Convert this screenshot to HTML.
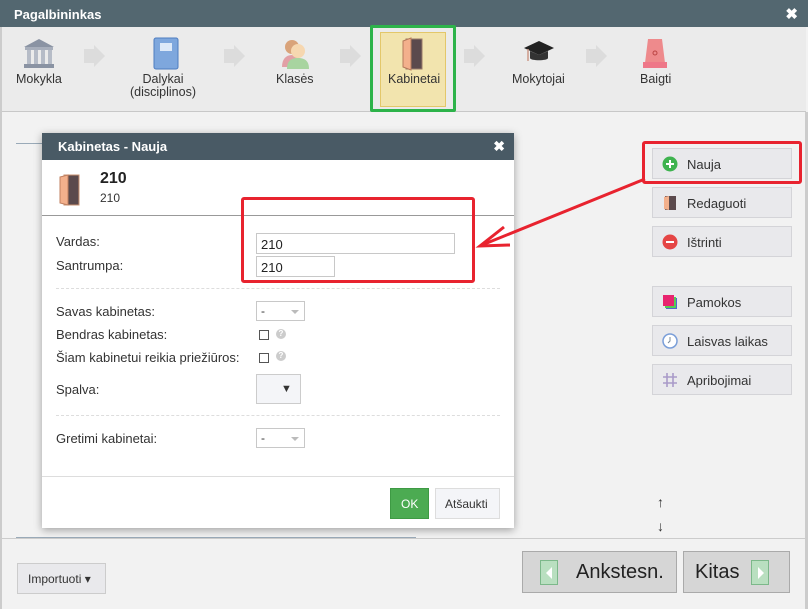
<!DOCTYPE html>
<html><head><meta charset="utf-8"><style>
*{box-sizing:border-box;margin:0;padding:0}
body{width:808px;height:609px;overflow:hidden;background:#f2f2f2;font-family:"Liberation Sans",sans-serif;font-size:13px;color:#333;position:relative}
.abs{position:absolute}
.title{left:0;top:0;width:808px;height:27px;background:#536770;color:#fff;font-weight:bold;font-size:13px;padding:7px 0 0 14px}
.wiz{left:2px;top:27px;width:804px;height:85px;background:#ebebeb;border-bottom:1px solid #c8c8c8}
.step{position:absolute;text-align:center;font-size:12.5px;color:#333;line-height:13px}
.arrow{position:absolute;width:0;height:0;border-top:11px solid transparent;border-bottom:11px solid transparent;border-left:11px solid #dcdcdc}
.arr-b{position:absolute;width:10px;height:14px;background:#dcdcdc}
.btn{position:absolute;left:652px;width:140px;height:31px;background:#e9e9ec;border:1px solid #d4d4d8;font-size:13px;padding:8px 0 0 34px;color:#333}
.btn .ic{position:absolute;left:9px;top:7px;width:16px;height:16px}
.modal{left:42px;top:133px;width:472px;height:395px;background:#fff;box-shadow:0 2px 8px rgba(0,0,0,.35)}
.mh{height:27px;background:#495a65;color:#fff;font-weight:bold;padding:6px 0 0 16px;font-size:13px}
.lbl{position:absolute;left:14px;font-size:13px;color:#333}
.inp{position:absolute;border:1px solid #c8c8c8;background:#fff;font-size:13px;padding:3px 0 0 4px;color:#222}
.sel{position:absolute;left:214px;width:49px;height:20px;border:1px solid #c8c8c8;font-size:12px;padding:2px 0 0 4px}
.sel:after{content:"";position:absolute;right:5px;top:8px;border-left:4px solid transparent;border-right:4px solid transparent;border-top:4px solid #bbb}
.cb{position:absolute;left:217px;width:10px;height:10px;border:1px solid #555}
.q{position:absolute;left:234px;width:10px;height:10px;border-radius:50%;background:#ccc;color:#fff;font-size:8px;font-weight:bold;text-align:center;line-height:10px}
.dash{position:absolute;left:14px;width:444px;border-top:1px dashed #ddd}
.gb{position:absolute;top:8px;width:18px;height:25px;background:#b9dfc0;border:1px solid #7cb88a}
</style></head><body>
<div class="abs title">Pagalbininkas<span style="position:absolute;right:10px;top:5px;font-size:15px">✖</span></div>
<div class="abs" style="left:0;top:27px;width:2px;height:582px;background:#ccc"></div>
<div class="abs wiz">
 <svg class="abs" style="left:20px;top:10px" width="34" height="32" viewBox="0 0 34 32"><polygon points="17,2 2,10 32,10" fill="#8a93a3"/><rect x="3" y="10" width="28" height="3" fill="#a7aebb"/><g fill="#b6bcc7"><rect x="5" y="13" width="4" height="14"/><rect x="12" y="13" width="4" height="14"/><rect x="19" y="13" width="4" height="14"/><rect x="26" y="13" width="4" height="14"/></g><rect x="2" y="27" width="30" height="4" fill="#8a93a3"/></svg>
 <div class="step" style="left:14px;top:46px">Mokykla</div>
 <div class="arr-b" style="left:82px;top:22px"></div><div class="arrow" style="left:92px;top:18px"></div>
 <svg class="abs" style="left:150px;top:10px" width="28" height="34"><rect x="2" y="1" width="24" height="31" rx="2" fill="#7ea7dd" stroke="#4d7cc0"/><rect x="8" y="6" width="12" height="8" fill="#dde9f8"/></svg>
 <div class="step" style="left:128px;top:46px">Dalykai<br>(disciplinos)</div>
 <div class="arr-b" style="left:222px;top:22px"></div><div class="arrow" style="left:232px;top:18px"></div>
 <svg class="abs" style="left:276px;top:10px" width="34" height="34"><circle cx="14" cy="10" r="7" fill="#d9a37a"/><path d="M4 30c0-8 4-12 10-12s10 4 10 12z" fill="#e2a0a6"/><circle cx="20" cy="14" r="7" fill="#f6d7b0"/><path d="M9 32c0-8 4-11 11-11s11 3 11 11z" fill="#a8d4a0"/></svg>
 <div class="step" style="left:274px;top:46px">Klasės</div>
 <div class="arr-b" style="left:338px;top:22px"></div><div class="arrow" style="left:348px;top:18px"></div>
 <div class="abs" style="left:368px;top:-2px;width:86px;height:87px;border:3px solid #2db34a;border-radius:2px"></div>
 <div class="abs" style="left:378px;top:5px;width:66px;height:75px;background:#f2e4ae;border:1px solid #e3c76a"></div>
 <svg class="abs" style="left:398px;top:10px" width="26" height="34"><rect x="6" y="2" width="16" height="30" fill="#5b4a4d" stroke="#9a7a6a"/><polygon points="3,4 11,1 11,33 3,30" fill="#f3b08c" stroke="#b57a5c"/></svg>
 <div class="step" style="left:386px;top:46px">Kabinetai</div>
 <div class="arr-b" style="left:462px;top:22px"></div><div class="arrow" style="left:472px;top:18px"></div>
 <svg class="abs" style="left:520px;top:12px" width="34" height="30"><polygon points="17,2 2,9 17,16 32,9" fill="#222"/><path d="M8 12v7c0 3 18 3 18 0v-7l-9 4z" fill="#333"/><line x1="6" y1="10" x2="6" y2="22" stroke="#c98" stroke-width="1.5"/></svg>
 <div class="step" style="left:510px;top:46px">Mokytojai</div>
 <div class="arr-b" style="left:584px;top:22px"></div><div class="arrow" style="left:594px;top:18px"></div>
 <svg class="abs" style="left:638px;top:10px" width="30" height="34"><path d="M8 2h14l3 24H5z" fill="#ee8a8c"/><rect x="3" y="25" width="24" height="6" fill="#e78"/><circle cx="15" cy="16" r="2" fill="none" stroke="#b44"/></svg>
 <div class="step" style="left:638px;top:46px">Baigti</div>
</div>
<div class="abs" style="left:805px;top:112px;width:3px;height:497px;background:#ccc"></div>
<div class="abs" style="left:16px;top:143px;width:30px;border-top:1px solid #9aaab8"></div>
<div class="abs" style="left:16px;top:537px;width:400px;border-top:1px solid #9aaab8"></div>
<div class="abs" style="left:0;top:538px;width:808px;border-top:1px solid #ccc"></div>

<div class="abs" style="left:642px;top:141px;width:160px;height:43px;border:3px solid #e8232f;border-radius:3px"></div>
<div class="btn" style="top:148px"><svg class="ic" viewBox="0 0 16 16"><circle cx="8" cy="8" r="7.5" fill="#3eb34f"/><path d="M8 4v8M4 8h8" stroke="#fff" stroke-width="2"/></svg>Nauja</div>
<div class="btn" style="top:187px"><svg class="ic" viewBox="0 0 16 16"><rect x="3" y="1" width="11" height="14" fill="#5b4a4d"/><polygon points="2,2 7,1 7,15 2,14" fill="#f3b08c"/></svg>Redaguoti</div>
<div class="btn" style="top:226px"><svg class="ic" viewBox="0 0 16 16"><circle cx="8" cy="8" r="7.5" fill="#e54545"/><path d="M4 8h8" stroke="#fff" stroke-width="2"/></svg>Ištrinti</div>
<div class="btn" style="top:286px"><svg class="ic" viewBox="0 0 16 16"><rect x="4" y="4" width="11" height="11" fill="#5566cc"/><rect x="3" y="3" width="11" height="11" fill="#5c5"/><rect x="1" y="1" width="11" height="11" fill="#e8246f"/></svg>Pamokos</div>
<div class="btn" style="top:325px"><svg class="ic" viewBox="0 0 16 16"><circle cx="8" cy="8" r="7" fill="#fff" stroke="#7a9ed8" stroke-width="1.5"/><path d="M8 4v4l-2 2" stroke="#789" fill="none"/></svg>Laisvas laikas</div>
<div class="btn" style="top:364px"><svg class="ic" viewBox="0 0 16 16"><path d="M5 1v14M11 1v14M1 5h14M1 11h14" stroke="#a99ac8" stroke-width="1.6"/></svg>Apribojimai</div>
<div class="abs" style="left:657px;top:494px;font-size:14px;font-weight:bold">↑</div>
<div class="abs" style="left:657px;top:518px;font-size:14px;font-weight:bold">↓</div>

<div class="abs modal">
 <div class="mh">Kabinetas - Nauja<span style="position:absolute;right:9px;top:5px;font-size:14px">✖</span></div>
 <svg class="abs" style="left:16px;top:41px" width="24" height="32"><rect x="6" y="1" width="15" height="30" fill="#5b4a4d" stroke="#c89070"/><polygon points="2,3 10,1 10,31 2,29" fill="#f3b08c" stroke="#c08060"/></svg>
 <div class="abs" style="left:58px;top:37px;font-size:16px;font-weight:bold;color:#222">210</div>
 <div class="abs" style="left:58px;top:58px;font-size:12px">210</div>
 <div class="abs" style="left:0;top:82px;width:472px;border-top:1px solid #999"></div>
 <div class="lbl" style="top:101px">Vardas:</div>
 <div class="lbl" style="top:125px">Santrumpa:</div>
 <div class="inp" style="left:214px;top:100px;width:199px;height:21px">210</div>
 <div class="inp" style="left:214px;top:123px;width:79px;height:21px">210</div>
 <div class="abs" style="left:199px;top:64px;width:234px;height:86px;border:3px solid #e8232f;border-radius:3px"></div>
 <div class="dash" style="top:155px"></div>
 <div class="lbl" style="top:171px">Savas kabinetas:</div><div class="sel" style="top:168px">-</div>
 <div class="lbl" style="top:194px">Bendras kabinetas:</div><div class="cb" style="top:197px"></div><div class="q" style="top:196px">?</div>
 <div class="lbl" style="top:217px">Šiam kabinetui reikia priežiūros:</div><div class="cb" style="top:220px"></div><div class="q" style="top:218px">?</div>
 <div class="lbl" style="top:249px">Spalva:</div>
 <div class="abs" style="left:214px;top:241px;width:45px;height:30px;background:#f4f5f8;border:1px solid #ccc;font-size:11px;padding:8px 0 0 24px">▼</div>
 <div class="dash" style="top:282px"></div>
 <div class="lbl" style="top:298px">Gretimi kabinetai:</div><div class="sel" style="top:295px">-</div>
 <div class="abs" style="left:0;top:343px;width:472px;border-top:1px solid #ddd"></div>
 <div class="abs" style="left:348px;top:355px;width:39px;height:31px;background:#4cab52;border:1px solid #3e9a44;color:#fff;font-size:12px;padding:8px 0 0 10px">OK</div>
 <div class="abs" style="left:393px;top:355px;width:65px;height:31px;background:#f4f5f8;border:1px solid #ddd;font-size:12px;padding:8px 0 0 9px">Atšaukti</div>
</div>
<svg class="abs" style="left:470px;top:175px" width="180" height="80"><line x1="175" y1="4" x2="12" y2="70" stroke="#e8232f" stroke-width="3"/><path d="M34 52L10 71L40 70" stroke="#e8232f" stroke-width="3" fill="none"/></svg>

<div class="abs" style="left:17px;top:563px;width:89px;height:31px;background:#e9e9ec;border:1px solid #ccc;font-size:12px;padding:8px 0 0 10px">Importuoti ▾</div>
<div class="abs" style="left:522px;top:551px;width:155px;height:42px;background:#d6d6d6;border:1px solid #aaa;font-size:20px;padding:9px 0 0 53px;color:#222">Ankstesn.
 <div class="gb" style="left:17px"><div class="abs" style="left:5px;top:6px;border-top:6px solid transparent;border-bottom:6px solid transparent;border-right:6px solid #fff"></div></div></div>
<div class="abs" style="left:683px;top:551px;width:107px;height:42px;background:#d6d6d6;border:1px solid #aaa;font-size:20px;padding:9px 0 0 11px;color:#222">Kitas
 <div class="gb" style="left:67px"><div class="abs" style="left:6px;top:6px;border-top:6px solid transparent;border-bottom:6px solid transparent;border-left:6px solid #fff"></div></div></div>
</body></html>
